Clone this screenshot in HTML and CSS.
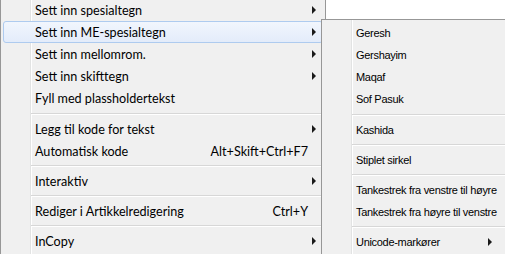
FILE: index.html
```html
<!DOCTYPE html>
<html>
<head>
<meta charset="utf-8">
<link rel="stylesheet" href="styles.css">
</head>
<body>
<div class="desk">
  <div class="menu main">
    <div class="item"><span class="label">Sett inn spesialtegn</span><span class="arrow"></span></div>
    <div class="item hover"><span class="label">Sett inn ME-spesialtegn</span><span class="arrow"></span></div>
    <div class="item"><span class="label">Sett inn mellomrom.</span><span class="arrow"></span></div>
    <div class="item"><span class="label">Sett inn skifttegn</span><span class="arrow"></span></div>
    <div class="item"><span class="label">Fyll med plassholdertekst</span></div>
    <div class="sep first"></div>
    <div class="item"><span class="label">Legg til kode for tekst</span><span class="arrow"></span></div>
    <div class="item"><span class="label">Automatisk kode</span><span class="key">Alt+Skift+Ctrl+F7</span></div>
    <div class="sep"></div>
    <div class="item"><span class="label">Interaktiv</span><span class="arrow"></span></div>
    <div class="sep"></div>
    <div class="item"><span class="label">Rediger i Artikkelredigering</span><span class="key">Ctrl+Y</span></div>
    <div class="sep"></div>
    <div class="item"><span class="label">InCopy</span><span class="arrow"></span></div>
  </div>
  <div class="menu submenu">
    <div class="item"><span class="label">Geresh</span></div>
    <div class="item"><span class="label">Gershayim</span></div>
    <div class="item"><span class="label">Maqaf</span></div>
    <div class="item"><span class="label">Sof Pasuk</span></div>
    <div class="sep first"></div>
    <div class="item"><span class="label">Kashida</span></div>
    <div class="sep"></div>
    <div class="item"><span class="label">Stiplet sirkel</span></div>
    <div class="sep"></div>
    <div class="item"><span class="label">Tankestrek fra venstre til høyre</span></div>
    <div class="item"><span class="label">Tankestrek fra høyre til venstre</span></div>
    <div class="sep"></div>
    <div class="item"><span class="label">Unicode-markører</span><span class="arrow"></span></div>
  </div>
</div>
</body>
</html>
```

FILE: styles.css
```css
html, body {
  margin: 0;
  padding: 0;
  background: #ffffff;
  overflow: hidden;
}
.desk {
  position: relative;
  width: 505px;
  height: 254px;
  overflow: hidden;
}
.menu {
  box-sizing: border-box;
  background-color: #f0f0f0;
  color: #000;
}
.main {
  width: 326px;
  margin-top: -4px;
  border: 1px solid #979797;
  padding: 2px;
  font-family: Lato, "Noto Sans", sans-serif;
  font-size: 12.6px;
  background-image: linear-gradient(to right, transparent 29px, #e2e3e3 29px, #e2e3e3 30px, #ffffff 30px, #ffffff 31px, transparent 31px);
}
.submenu {
  position: absolute;
  left: 321px;
  top: 19px;
  width: 210px;
  border: 1px solid #979797;
  padding: 2px;
  font-family: "Liberation Sans", sans-serif;
  font-size: 11px;
  letter-spacing: -0.3px;
  background-image: linear-gradient(to right, transparent 29px, #e2e3e3 29px, #e2e3e3 30px, #ffffff 30px, #ffffff 31px, transparent 31px);
}
.item {
  display: flex;
  align-items: center;
  height: 22px;
  box-sizing: border-box;
  padding-left: 31px;
  padding-right: 6px;
  border: 1px solid transparent;
  border-radius: 3px;
}
.submenu .item { padding-left: 31px; padding-right: 11px; width: 180px; }
.item.hover {
  border-color: #aecbef;
  background: linear-gradient(to bottom, #f1f6fd, #e3ecfa);
}
.label {
  flex: 1;
  white-space: nowrap;
}
.key {
  margin-right: 8px;
  white-space: nowrap;
}
.arrow {
  width: 0;
  height: 0;
  border-left: 4px solid #1a1a1a;
  border-top: 4px solid transparent;
  border-bottom: 4px solid transparent;
}
.sep {
  height: 8px;
  margin-left: 28px;
  background: linear-gradient(to bottom, transparent 3px, #d7d7d7 3px, #d7d7d7 4px, #ffffff 4px, #ffffff 5px, transparent 5px);
}
.sep.first {
  height: 9px;
  background: linear-gradient(to bottom, transparent 4px, #d7d7d7 4px, #d7d7d7 5px, #ffffff 5px, #ffffff 6px, transparent 6px);
}
```
